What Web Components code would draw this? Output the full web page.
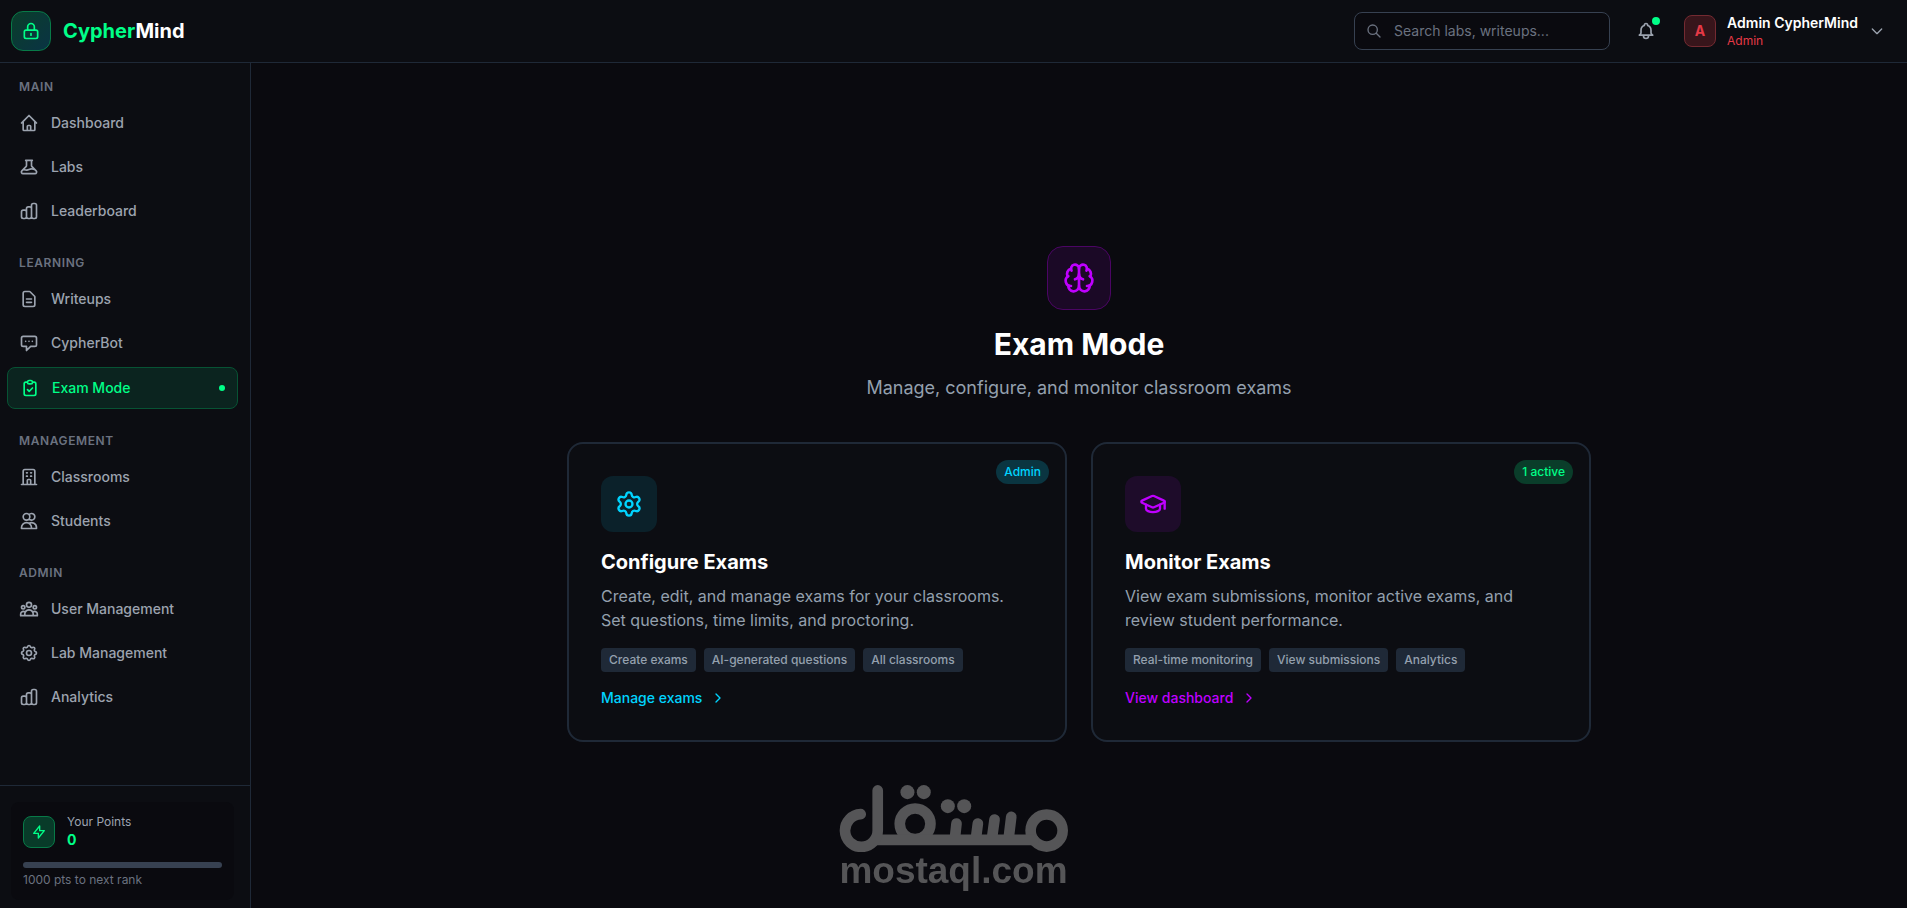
<!DOCTYPE html>
<html lang="en">
<head>
<meta charset="UTF-8">
<meta name="viewport" content="width=device-width, initial-scale=1.0">
<title>CypherMind - Exam Mode</title>
<style>
  :root {
    --bg: #0a0a0f;
    --panel: #0c0d12;
    --line: #1f2937;
    --text: #9ca3af;
    --soft: #94a0ae;
    --muted: #6b7280;
    --green: #00ff88;
    --cyan: #00d4ff;
    --purple: #bf00ff;
    --red: #e63946;
  }
  body {
    margin: 0;
    background: var(--bg);
    color: var(--text);
    font-family: Inter, "Liberation Sans", sans-serif;
    font-size: 14px;
    line-height: 20px;
  }
</style>
</head>
<body>
<cyber-layout>
  <top-bar slot="header" user="Admin CypherMind" role-name="Admin" initial="A"></top-bar>

  <side-bar slot="sidebar">
    <nav-group label="Main">
      <nav-item icon="home">Dashboard</nav-item>
      <nav-item icon="beaker">Labs</nav-item>
      <nav-item icon="chart">Leaderboard</nav-item>
    </nav-group>
    <nav-group label="Learning">
      <nav-item icon="document">Writeups</nav-item>
      <nav-item icon="chat">CypherBot</nav-item>
      <nav-item icon="clipboard" active>Exam Mode</nav-item>
    </nav-group>
    <nav-group label="Management">
      <nav-item icon="building">Classrooms</nav-item>
      <nav-item icon="users">Students</nav-item>
    </nav-group>
    <nav-group label="Admin">
      <nav-item icon="group">User Management</nav-item>
      <nav-item icon="cog">Lab Management</nav-item>
      <nav-item icon="chart">Analytics</nav-item>
    </nav-group>
    <points-card slot="footer" points="0" next="1000"></points-card>
  </side-bar>

  <exam-hero>
    <span slot="title">Exam Mode</span>
    <span slot="subtitle">Manage, configure, and monitor classroom exams</span>
    <exam-card icon="settings" color="cyan" badge="Admin" badge-color="cyan" link="Manage exams">
      <span slot="title">Configure Exams</span>
      Create, edit, and manage exams for your classrooms. Set questions, time limits, and proctoring.
      <tag-chip slot="tags">Create exams</tag-chip>
      <tag-chip slot="tags">AI-generated questions</tag-chip>
      <tag-chip slot="tags">All classrooms</tag-chip>
    </exam-card>
    <exam-card icon="graduation" color="purple" badge="1 active" badge-color="green" link="View dashboard">
      <span slot="title">Monitor Exams</span>
      View exam submissions, monitor active exams, and review student performance.
      <tag-chip slot="tags">Real-time monitoring</tag-chip>
      <tag-chip slot="tags">View submissions</tag-chip>
      <tag-chip slot="tags">Analytics</tag-chip>
    </exam-card>
  </exam-hero>
</cyber-layout>
<mostaql-mark></mostaql-mark>

<script>
const ICONS = {
  lock: '<path d="M12 15v2m-6 4h12a2 2 0 002-2v-6a2 2 0 00-2-2H6a2 2 0 00-2 2v6a2 2 0 002 2zm10-10V7a4 4 0 00-8 0v4h8z"/>',
  home: '<path d="M3 12l2-2m0 0l7-7 7 7M5 10v10a1 1 0 001 1h3m10-11l2 2m-2-2v10a1 1 0 01-1 1h-3m-6 0a1 1 0 001-1v-4a1 1 0 011-1h2a1 1 0 011 1v4a1 1 0 001 1m-6 0h6"/>',
  beaker: '<path d="M19.428 15.428a2 2 0 00-1.022-.547l-2.387-.477a6 6 0 00-3.86.517l-.318.158a6 6 0 01-3.86.517L6.05 15.21a2 2 0 00-1.806.547M8 4h8l-1 1v5.172a2 2 0 00.586 1.414l5 5c1.26 1.26.367 3.414-1.415 3.414H4.828c-1.782 0-2.674-2.154-1.414-3.414l5-5A2 2 0 009 10.172V5L8 4z"/>',
  chart: '<path d="M9 19v-6a2 2 0 00-2-2H5a2 2 0 00-2 2v6a2 2 0 002 2h2a2 2 0 002-2zm0 0V9a2 2 0 012-2h2a2 2 0 012 2v10m-6 0a2 2 0 002 2h2a2 2 0 002-2m0 0V5a2 2 0 012-2h2a2 2 0 012 2v14a2 2 0 01-2 2h-2a2 2 0 01-2-2z"/>',
  document: '<path d="M9 12h6m-6 4h6m2 5H7a2 2 0 01-2-2V5a2 2 0 012-2h5.586a1 1 0 01.707.293l5.414 5.414a1 1 0 01.293.707V19a2 2 0 01-2 2z"/>',
  chat: '<path d="M8 10h.01M12 10h.01M16 10h.01M9 16H5a2 2 0 01-2-2V6a2 2 0 012-2h14a2 2 0 012 2v8a2 2 0 01-2 2h-5l-5 5v-5z"/>',
  clipboard: '<path d="M9 5H7a2 2 0 00-2 2v12a2 2 0 002 2h10a2 2 0 002-2V7a2 2 0 00-2-2h-2M9 5a2 2 0 002 2h2a2 2 0 002-2M9 5a2 2 0 012-2h2a2 2 0 012 2m-6 9l2 2 4-4"/>',
  building: '<path d="M19 21V5a2 2 0 00-2-2H7a2 2 0 00-2 2v16m14 0h2m-2 0h-5m-9 0H3m2 0h5M9 7h1m-1 4h1m4-4h1m-1 4h1m-5 10v-5a1 1 0 011-1h2a1 1 0 011 1v5m-4 0h4"/>',
  users: '<path d="M12 4.354a4 4 0 110 5.292M15 21H3v-1a6 6 0 0112 0v1zm0 0h6v-1a6 6 0 00-9-5.197M13 7a4 4 0 11-8 0 4 4 0 018 0z"/>',
  group: '<path d="M17 20h5v-2a3 3 0 00-5.356-1.857M17 20H7m10 0v-2c0-.656-.126-1.283-.356-1.857M7 20H2v-2a3 3 0 015.356-1.857M7 20v-2c0-.656.126-1.283.356-1.857m0 0a5.002 5.002 0 019.288 0M15 7a3 3 0 11-6 0 3 3 0 016 0zm6 3a2 2 0 11-4 0 2 2 0 014 0zM7 10a2 2 0 11-4 0 2 2 0 014 0z"/>',
  cog: '<path d="M10.325 4.317c.426-1.756 2.924-1.756 3.35 0a1.724 1.724 0 002.573 1.066c1.543-.94 3.31.826 2.37 2.37a1.724 1.724 0 001.065 2.572c1.756.426 1.756 2.924 0 3.35a1.724 1.724 0 00-1.066 2.573c.94 1.543-.826 3.31-2.37 2.37a1.724 1.724 0 00-2.572 1.065c-.426 1.756-2.924 1.756-3.35 0a1.724 1.724 0 00-2.573-1.066c-1.543.94-3.31-.826-2.37-2.37a1.724 1.724 0 00-1.065-2.572c-1.756-.426-1.756-2.924 0-3.35a1.724 1.724 0 001.066-2.573c-.94-1.543.826-3.31 2.37-2.37.996.608 2.296.07 2.572-1.065z"/><circle cx="12" cy="12" r="3"/>',
  search: '<path d="M21 21l-6-6m2-5a7 7 0 11-14 0 7 7 0 0114 0z"/>',
  bell: '<path d="M15 17h5l-1.405-1.405A2.032 2.032 0 0118 14.158V11a6.002 6.002 0 00-4-5.659V5a2 2 0 10-4 0v.341C7.67 6.165 6 8.388 6 11v3.159c0 .538-.214 1.055-.595 1.436L4 17h5m6 0v1a3 3 0 11-6 0v-1m6 0H9"/>',
  down: '<path d="M19 9l-7 7-7-7"/>',
  right: '<path d="m9 18 6-6-6-6"/>',
  bolt: '<path d="M13 10V3L4 14h7v7l9-11h-7z"/>',
  brain: '<path d="M12 18V5"/><path d="M15 13a4.17 4.17 0 0 1-3-4 4.17 4.17 0 0 1-3 4"/><path d="M17.598 6.5A3 3 0 1 0 12 5a3 3 0 1 0-5.598 1.5"/><path d="M17.997 5.125a4 4 0 0 1 2.526 5.77"/><path d="M18 18a4 4 0 0 0 2-7.464"/><path d="M19.967 17.483A4 4 0 1 1 12 18a4 4 0 1 1-7.967-.517"/><path d="M6 18a4 4 0 0 1-2-7.464"/><path d="M6.003 5.125a4 4 0 0 0-2.526 5.77"/>',
  settings: '<path d="M9.671 4.136a2.34 2.34 0 0 1 4.659 0 2.34 2.34 0 0 0 3.319 1.915 2.34 2.34 0 0 1 2.33 4.033 2.34 2.34 0 0 0 0 3.831 2.34 2.34 0 0 1-2.33 4.033 2.34 2.34 0 0 0-3.319 1.915 2.34 2.34 0 0 1-4.659 0 2.34 2.34 0 0 0-3.32-1.915 2.34 2.34 0 0 1-2.33-4.033 2.34 2.34 0 0 0 0-3.831A2.34 2.34 0 0 1 6.35 6.051a2.34 2.34 0 0 0 3.319-1.915"/><circle cx="12" cy="12" r="3"/>',
  graduation: '<path d="M21.42 10.922a1 1 0 0 0-.019-1.838L12.83 5.18a2 2 0 0 0-1.66 0L2.6 9.08a1 1 0 0 0 0 1.832l8.57 3.908a2 2 0 0 0 1.66 0z"/><path d="M22 10v6"/><path d="M6 12.5V16a6 3 0 0 0 12 0v-3.5"/>'
}

// shared base: every element renders its own template once
class CyberElement extends HTMLElement {
  constructor() {
    super()
    this.attachShadow({ mode: 'open' })
  }
  connectedCallback() {
    const template = document.createElement('template')
    template.innerHTML = `<style>*{box-sizing:border-box} ${this.getStyles()}</style>${this.getTemplate()}`
    this.shadowRoot.replaceChildren(template.content.cloneNode(true))
  }
  attr(name, fallback = '') {
    return this.getAttribute(name) || fallback
  }
}

class CyberIcon extends CyberElement {
  getTemplate() {
    const size = this.attr('size', '20')
    return `<svg width="${size}" height="${size}" viewBox="0 0 24 24" fill="none" stroke="currentColor"
      stroke-width="${this.attr('weight', '2')}" stroke-linecap="round" stroke-linejoin="round"
      aria-hidden="true">${ICONS[this.attr('name')]}</svg>`
  }
  getStyles() {
    return `
      :host { display: inline-flex; flex: none; }
      svg { display: block; }
    `
  }
}

class CyberLayout extends CyberElement {
  getTemplate() {
    return `
      <slot name="header"></slot>
      <div class="body">
        <slot name="sidebar"></slot>
        <main><slot></slot></main>
      </div>
    `
  }
  getStyles() {
    return `
      :host { display: flex; flex-direction: column; min-height: 100vh; }
      .body { flex: 1; display: flex; }
      main {
        flex: 1;
        min-width: 0;
        display: flex;
        align-items: center;
        justify-content: center;
        padding: 40px 24px 24px;
      }
    `
  }
}

class TopBar extends CyberElement {
  getTemplate() {
    return `
      <header>
        <a class="brand" href="#">
          <span class="logo"><cyber-icon name="lock"></cyber-icon></span>
          <span class="name"><span class="green">Cypher</span>Mind</span>
        </a>
        <div class="actions">
          <label class="search" for="search">
            <cyber-icon name="search" size="16"></cyber-icon>
            <input id="search" type="search" placeholder="Search labs, writeups..." aria-label="Search">
          </label>
          <button class="bell" type="button" aria-label="Notifications">
            <cyber-icon name="bell"></cyber-icon>
            <span class="dot"></span>
          </button>
          <button class="user" type="button">
            <span class="avatar">${this.attr('initial')}</span>
            <span class="who">
              <span class="user-name">${this.attr('user')}</span>
              <span class="role">${this.attr('role-name')}</span>
            </span>
            <cyber-icon name="down" size="16"></cyber-icon>
          </button>
        </div>
      </header>
    `
  }
  getStyles() {
    return `
      :host { display: block; }
      header {
        display: flex;
        align-items: center;
        justify-content: space-between;
        padding: 11px 22px 11px 11px;
        background: var(--panel);
        border-bottom: 1px solid var(--line);
      }
      .brand {
        display: flex;
        align-items: center;
        gap: 12px;
        color: #fff;
        text-decoration: none;
      }
      .logo {
        display: flex;
        align-items: center;
        justify-content: center;
        width: 40px;
        height: 40px;
        border: 1px solid #087a48;
        border-radius: 12px;
        background: linear-gradient(135deg, #0a3e2a, #0a3344);
        color: var(--green);
      }
      .name { font-size: 20px; line-height: 28px; font-weight: 700; }
      .green { color: var(--green); }
      .actions { display: flex; align-items: center; }
      .search {
        display: flex;
        align-items: center;
        gap: 12px;
        width: 256px;
        height: 38px;
        padding: 0 11px;
        border: 1px solid #374151;
        border-radius: 8px;
        background: var(--bg);
        color: var(--muted);
      }
      input {
        flex: 1;
        min-width: 0;
        padding: 0;
        border: 0;
        outline: 0;
        background: none;
        color: #fff;
        font: inherit;
      }
      input::placeholder { color: var(--muted); }
      button {
        padding: 0;
        border: 0;
        background: none;
        color: var(--text);
        font: inherit;
        text-align: left;
        cursor: pointer;
      }
      .bell { position: relative; display: flex; padding: 8px; margin: 0 20px 0 18px; }
      .dot {
        position: absolute;
        top: 4px;
        right: 4px;
        width: 8px;
        height: 8px;
        border-radius: 50%;
        background: var(--green);
      }
      .user { display: flex; align-items: center; gap: 11px; }
      .avatar {
        display: flex;
        align-items: center;
        justify-content: center;
        width: 32px;
        height: 32px;
        border: 1px solid #742a31;
        border-radius: 8px;
        background: #38151b;
        color: var(--red);
        font-weight: 700;
      }
      .who { display: flex; flex-direction: column; }
      .user-name { color: #fff; font-weight: 600; }
      .role { color: var(--red); font-size: 12px; line-height: 16px; }
    `
  }
}

class SideBar extends CyberElement {
  getTemplate() {
    return `
      <nav><slot></slot></nav>
      <footer><slot name="footer"></slot></footer>
    `
  }
  getStyles() {
    return `
      :host {
        display: flex;
        flex-direction: column;
        flex: none;
        width: 251px;
        box-sizing: border-box;
        background: var(--panel);
        border-right: 1px solid var(--line);
      }
      nav {
        flex: 1;
        display: flex;
        flex-direction: column;
        gap: 24px;
        padding: 16px 12px 16px 7px;
      }
      footer { padding: 16px 16px 8px 11px; border-top: 1px solid var(--line); }
    `
  }
}

class NavGroup extends CyberElement {
  getTemplate() {
    return `
      <h2>${this.attr('label')}</h2>
      <div class="items"><slot></slot></div>
    `
  }
  getStyles() {
    return `
      :host { display: block; }
      h2 {
        margin: 0 0 8px;
        padding: 0 12px;
        color: var(--muted);
        font-size: 12px;
        line-height: 16px;
        font-weight: 600;
        letter-spacing: 0.05em;
        text-transform: uppercase;
      }
      .items { display: flex; flex-direction: column; gap: 4px; }
    `
  }
}

class NavItem extends CyberElement {
  getTemplate() {
    return `
      <a href="#">
        <cyber-icon name="${this.attr('icon')}"></cyber-icon>
        <span><slot></slot></span>
        ${this.hasAttribute('active') ? '<i class="dot"></i>' : ''}
      </a>
    `
  }
  getStyles() {
    return `
      :host { display: block; }
      a {
        display: flex;
        align-items: center;
        gap: 12px;
        padding: 10px 12px;
        border-radius: 8px;
        color: var(--text);
        font-weight: 500;
        text-decoration: none;
      }
      span { flex: 1; }
      :host([active]) a {
        border: 1px solid #075334;
        background: #0b241f;
        color: var(--green);
      }
      .dot {
        width: 6px;
        height: 6px;
        border-radius: 50%;
        background: var(--green);
      }
    `
  }
}

class PointsCard extends CyberElement {
  getTemplate() {
    return `
      <div class="row">
        <span class="icon"><cyber-icon name="bolt" size="16"></cyber-icon></span>
        <div>
          <div class="label">Your Points</div>
          <div class="value">${this.attr('points')}</div>
        </div>
      </div>
      <div class="bar"></div>
      <div class="next">${this.attr('next')} pts to next rank</div>
    `
  }
  getStyles() {
    return `
      :host {
        display: block;
        padding: 12px;
        border-radius: 8px;
        background: var(--bg);
      }
      .row { display: flex; align-items: center; gap: 12px; margin-bottom: 12px; }
      .icon {
        display: flex;
        align-items: center;
        justify-content: center;
        width: 32px;
        height: 32px;
        border: 1px solid #087a48;
        border-radius: 8px;
        background: #083b29;
        color: var(--green);
      }
      .label { font-size: 12px; line-height: 16px; }
      .value { color: var(--green); font-weight: 700; }
      .bar { height: 6px; border-radius: 3px; background: #374151; }
      .next { margin-top: 4px; color: var(--muted); font-size: 12px; line-height: 16px; }
    `
  }
}

class ExamHero extends CyberElement {
  getTemplate() {
    return `
      <div class="head">
        <div class="icon"><cyber-icon name="brain" size="32"></cyber-icon></div>
        <h1><slot name="title"></slot></h1>
        <p><slot name="subtitle"></slot></p>
      </div>
      <div class="cards"><slot></slot></div>
    `
  }
  getStyles() {
    return `
      :host { display: block; width: 100%; max-width: 1024px; }
      .head {
        display: flex;
        flex-direction: column;
        align-items: center;
        margin-bottom: 40px;
        text-align: center;
      }
      .icon {
        display: flex;
        align-items: center;
        justify-content: center;
        width: 64px;
        height: 64px;
        margin-bottom: 16px;
        border: 1px solid #4b0564;
        border-radius: 16px;
        background: #1b0926;
        color: var(--purple);
      }
      h1 { margin: 0 0 12px; color: #fff; font-size: 30px; line-height: 36px; font-weight: 700; }
      p { margin: 0; color: var(--soft); font-size: 18px; line-height: 28px; }
      .cards { display: grid; grid-template-columns: repeat(auto-fit, minmax(400px, 1fr)); gap: 24px; }
    `
  }
}

class ExamCard extends CyberElement {
  getTemplate() {
    return `
      <span class="badge">${this.attr('badge')}</span>
      <div class="icon"><cyber-icon name="${this.attr('icon')}" size="28"></cyber-icon></div>
      <h3><slot name="title"></slot></h3>
      <p><slot></slot></p>
      <div class="tags"><slot name="tags"></slot></div>
      <a href="#">${this.attr('link')} <cyber-icon name="right" size="16"></cyber-icon></a>
    `
  }
  getStyles() {
    return `
      :host {
        --accent: var(--${this.attr('color')});
        --badge: var(--${this.attr('badge-color')});
        position: relative;
        display: block;
        padding: 32px;
        border: 2px solid var(--line);
        border-radius: 16px;
        background: var(--panel);
      }
      .badge {
        position: absolute;
        top: 16px;
        right: 16px;
        padding: 4px 8px;
        border-radius: 12px;
        background: color-mix(in srgb, var(--badge) 20%, var(--panel));
        color: var(--badge);
        font-size: 12px;
        line-height: 16px;
        font-weight: 500;
      }
      .icon {
        display: flex;
        align-items: center;
        justify-content: center;
        width: 56px;
        height: 56px;
        margin-bottom: 16px;
        border-radius: 12px;
        background: color-mix(in srgb, var(--accent) 10%, var(--panel));
        color: var(--accent);
      }
      h3 { margin: 0 0 8px; color: #fff; font-size: 20px; line-height: 28px; font-weight: 700; }
      p { margin: 0 0 16px; color: var(--soft); font-size: 16px; line-height: 24px; }
      .tags { display: flex; flex-wrap: wrap; gap: 8px; margin-bottom: 16px; }
      a {
        display: flex;
        align-items: center;
        gap: 8px;
        width: max-content;
        color: var(--accent);
        font-weight: 500;
        text-decoration: none;
      }
    `
  }
}

class TagChip extends CyberElement {
  getTemplate() {
    return `<slot></slot>`
  }
  getStyles() {
    return `
      :host {
        display: block;
        padding: 4px 8px;
        border-radius: 4px;
        background: #1f2937;
        color: var(--soft);
        font-size: 12px;
        line-height: 16px;
        font-weight: 500;
      }
    `
  }
}

class MostaqlMark extends CyberElement {
  getTemplate() {
    return `
      <svg width="229" height="67" viewBox="57 45 686 200" fill="none" stroke="currentColor"
        stroke-width="32" stroke-linecap="round" aria-hidden="true">
        <circle cx="679" cy="181" r="48"/>
        <circle cx="285" cy="161" r="46"/>
        <path d="M165 209H640M409 160l-5 46M473 160l-6 46M523 148l-8 58M573 140l-8 66"/>
        <path d="M122 132A49 49 0 1 0 173 181V61"/>
        <g fill="currentColor" stroke="none">
          <circle cx="262" cy="66" r="21"/><circle cx="311" cy="66" r="21"/>
          <circle cx="383" cy="108" r="21"/><circle cx="432" cy="108" r="21"/>
        </g>
      </svg>
      <div>mostaql.com</div>
    `
  }
  getStyles() {
    return `
      :host {
        position: fixed;
        left: 0;
        right: 0;
        bottom: 18px;
        display: flex;
        flex-direction: column;
        align-items: center;
        color: #555557;
        pointer-events: none;
      }
      div { font: 700 37px/38px "Liberation Sans", Arial, sans-serif; }
    `
  }
}

customElements.define('cyber-icon', CyberIcon)
customElements.define('cyber-layout', CyberLayout)
customElements.define('top-bar', TopBar)
customElements.define('side-bar', SideBar)
customElements.define('nav-group', NavGroup)
customElements.define('nav-item', NavItem)
customElements.define('points-card', PointsCard)
customElements.define('exam-hero', ExamHero)
customElements.define('exam-card', ExamCard)
customElements.define('tag-chip', TagChip)
customElements.define('mostaql-mark', MostaqlMark)
</script>
</body>
</html>
